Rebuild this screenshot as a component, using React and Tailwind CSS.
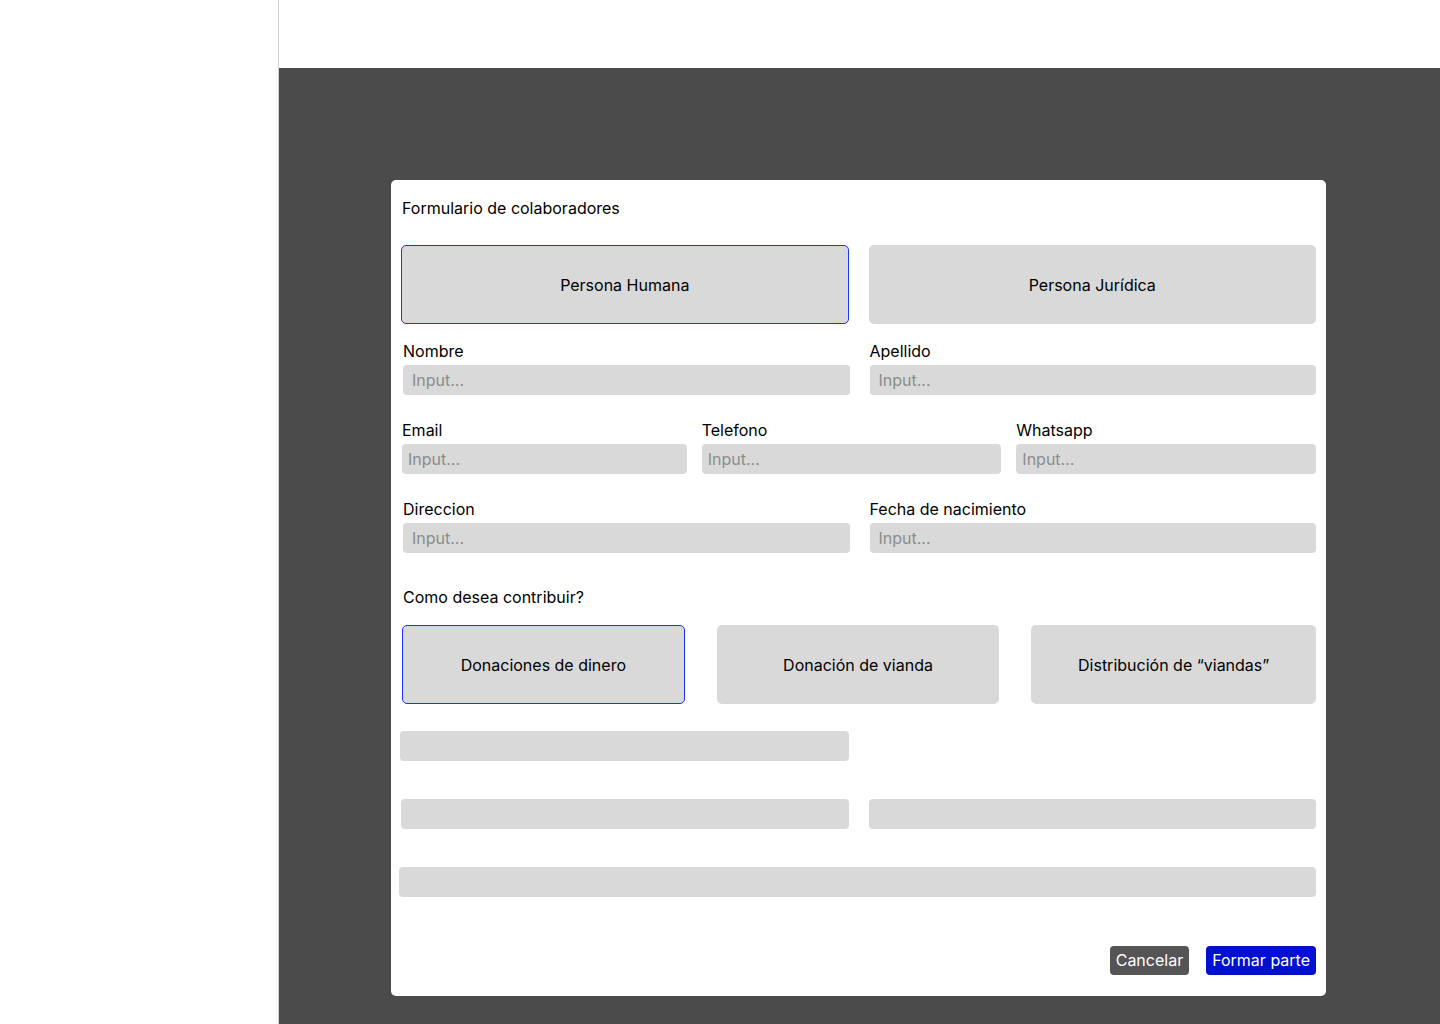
export default function App() {
  const font = { fontFamily: "Inter, 'Liberation Sans', sans-serif" };

  return (
    <div className="flex w-[1440px] h-[1024px] bg-white text-black" style={font}>
      <aside className="w-[279px] h-full border-r border-[#d4d4d4] bg-white" />

      <div className="flex-1 flex flex-col">
        <header className="h-[68px] bg-white" />

        <main className="flex-1 bg-[#4b4b4b] pl-[112px] pt-[112px]">
          <div className="w-[935px] h-[816px] bg-white rounded-[5px] px-[10px] pt-[18px] flex flex-col">
            <h1 className="pl-[1px] text-[16px] leading-[20px]">
              Formulario de colaboradores
            </h1>

            <div className="mt-[27px] grid grid-cols-2 gap-[20px]">
              <button className="h-[79px] bg-[#d9d9d9] rounded-[5px] border border-[#1437f5] text-[16px]">
                Persona Humana
              </button>
              <button className="h-[79px] bg-[#d9d9d9] rounded-[5px] text-[16px]">
                Persona Jurídica
              </button>
            </div>

            <div className="mt-[17px] pl-[2px] grid grid-cols-2 gap-[20px]">
              <Field label="Nombre" />
              <Field label="Apellido" />
            </div>

            <div className="mt-[25px] pl-[1px] flex gap-[15px]">
              <Field label="Email" className="w-[285px]" small />
              <Field label="Telefono" className="w-[300px]" small />
              <Field label="Whatsapp" className="w-[300px]" small />
            </div>

            <div className="mt-[25px] pl-[2px] grid grid-cols-2 gap-[20px]">
              <Field label="Direccion" />
              <Field label="Fecha de nacimiento" />
            </div>

            <p className="mt-[34px] pl-[2px] text-[16px] leading-[20px]">
              Como desea contribuir?
            </p>

            <div className="mt-[18px] pl-[1px] flex gap-[32px]">
              <button className="w-[283px] h-[79px] bg-[#d9d9d9] rounded-[5px] border border-[#1437f5] text-[16px]">
                Donaciones de dinero
              </button>
              <button className="w-[283px] h-[79px] bg-[#d9d9d9] rounded-[5px] text-[16px]">
                Donación de vianda
              </button>
              <button className="w-[285px] h-[79px] bg-[#d9d9d9] rounded-[5px] text-[16px]">
                Distribución de “viandas”
              </button>
            </div>

            <div className="mt-[27px] -ml-[1px] w-[449px] h-[30px] bg-[#d9d9d9] rounded-[4px]" />

            <div className="mt-[38px] grid grid-cols-2 gap-[20px]">
              <div className="h-[30px] bg-[#d9d9d9] rounded-[4px]" />
              <div className="h-[30px] bg-[#d9d9d9] rounded-[4px]" />
            </div>

            <div className="mt-[38px] -ml-[2px] h-[30px] bg-[#d9d9d9] rounded-[4px]" />

            <div className="mt-[49px] flex justify-end gap-[17px]">
              <button className="h-[29px] px-[6px] bg-[#555555] text-white rounded-[4px] text-[16px] leading-[29px]">
                Cancelar
              </button>
              <button className="h-[29px] px-[6px] bg-[#0010d0] text-white rounded-[4px] text-[16px] leading-[29px]">
                Formar parte
              </button>
            </div>
          </div>
        </main>
      </div>
    </div>
  );
}

function Field({ label, className = "", small }) {
  return (
    <div className={className}>
      <label className="block text-[16px] leading-[20px]">{label}</label>
      <div
        className={`mt-[4px] h-[30px] bg-[#d9d9d9] rounded-[4px] flex items-center text-[16px] text-[#8c8c8c] ${
          small ? "pl-[6px]" : "pl-[9px]"
        }`}
      >
        Input...
      </div>
    </div>
  );
}
